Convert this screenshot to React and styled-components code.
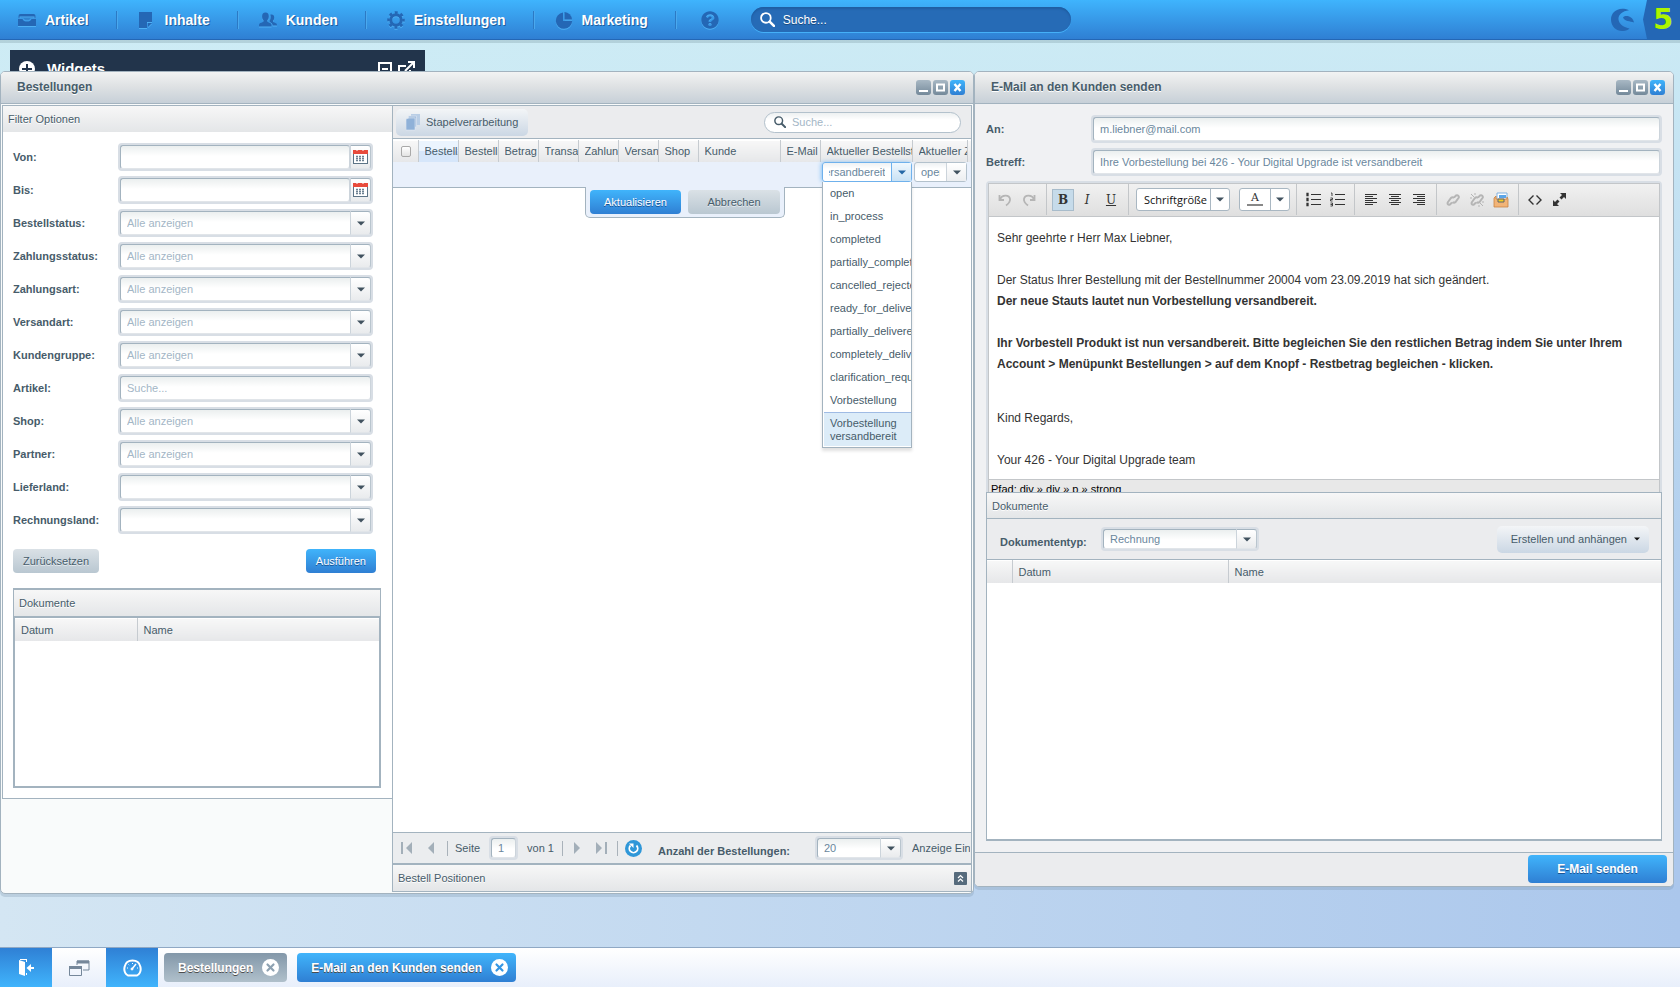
import React, { useEffect, useRef, useState } from 'react';
import styled, { createGlobalStyle, css } from 'styled-components';
import { FaQuestionCircle } from 'react-icons/fa';

const line = '#a3b3bf';
const text = '#475c6a';
const blue = 'linear-gradient(#40b4fb, #2f7fd3)';

const GlobalStyle = createGlobalStyle`
  * {
    box-sizing: border-box;
  }
  body {
    margin: 0;
    font: 11px/14px 'Liberation Sans', Arial, Helvetica, sans-serif;
    color: ${text};
  }
  button, input, select {
    font: inherit;
    color: inherit;
    margin: 0;
  }
  button {
    border: 0;
    padding: 0;
    background: none;
    cursor: pointer;
  }
  table {
    border-collapse: collapse;
    table-layout: fixed;
    width: 100%;
  }
`;

const Page = styled.div`
  display: flex;
  flex-direction: column;
  min-height: 100vh;
  background: linear-gradient(to bottom, #cdecf5 0%, rgba(205, 236, 245, 0) 70%),
    linear-gradient(to right, #d4e6f3, #abc7ec);
`;

/* ---------- top bar ---------- */

const TopBar = styled.header`
  display: flex;
  height: 40px;
  background: linear-gradient(#3fb4fd, #2f7fd3);
  border-bottom: 1px solid #2467b5;
  box-shadow: 0 3px 0 rgba(120, 150, 160, 0.3);
`;

const MainNav = styled.nav`
  display: flex;
  align-items: center;
`;

const NavLink = styled.a`
  display: flex;
  align-items: center;
  height: 18px;
  padding: 0 27px 0 ${(props) => (props.$first ? 18 : 21)}px;
  border-right: 1px solid #2c79c4;
  box-shadow: 1px 0 0 #4aa9ee;
  font-size: 14px;
  font-weight: bold;
  color: #fff;
  text-decoration: none;
  text-shadow: 1px 1px 0 #1f5f9f;

  svg {
    width: 18px;
    height: 18px;
    margin-right: 9px;
    color: #2467b5;
    filter: drop-shadow(0 1px 0 #4fb0f4);
  }
`;

const HelpButton = styled.button`
  display: flex;
  margin: 0 32px 0 25px;
  color: #2467b5;
  filter: drop-shadow(0 1px 0 #4fb0f4);
`;

const GlobalSearch = styled.label`
  display: flex;
  align-items: center;
  align-self: center;
  gap: 8px;
  width: 320px;
  height: 25px;
  padding: 0 9px;
  border-radius: 13px;
  background: #266bb6;
  box-shadow: inset 0 2px 2px #1f5ea3, 0 1px 0 #45b0f8;

  input {
    flex: 1;
    min-width: 0;
    border: 0;
    padding: 0;
    outline: none;
    background: none;
    font-size: 12px;
    color: #fff;
  }
  input::placeholder {
    color: #fff;
    opacity: 1;
    text-shadow: 0 1px 0 #174a80;
  }
`;

const Brand = styled.div`
  display: flex;
  margin-left: auto;
  gap: 8px;
  align-items: center;
`;

const Version = styled.span`
  display: flex;
  align-items: center;
  justify-content: center;
  width: 37px;
  height: 39px;
  padding-left: 3px;
  background: #2467b5;
  clip-path: polygon(4px 0, 100% 0, 100% 100%, 4px 100%, 0 50%);
  font: bold 29px/39px 'DejaVu Sans', sans-serif;
  color: #adf400;
`;

/* ---------- desktop ---------- */

const Desktop = styled.main`
  position: relative;
  flex: 1;
  display: grid;
  grid-template-columns: minmax(0, 974fr) minmax(0, 700fr);
  padding: 31px 6px 53px 0;
`;

const WidgetBar = styled.section`
  position: absolute;
  top: 10px;
  left: 10px;
  display: flex;
  align-items: center;
  width: 415px;
  height: 38px;
  padding: 0 10px 0 9px;
  background: #22344b;
  color: #fff;

  h2 {
    flex: 1;
    margin: 0 0 0 12px;
    font-size: 15px;
    line-height: 18px;
  }
  svg + svg {
    margin-left: 6px;
  }
`;

const Window = styled.section`
  position: relative;
  display: flex;
  flex-direction: column;
  min-width: 0;
  margin-bottom: ${(props) => props.$lift || 0}px;
  border: 1px solid ${line};
  border-radius: 5px;
  background: ${(props) => props.$bg};
  box-shadow: 0 3px 0 rgba(110, 140, 165, 0.25);
`;

const TitleBar = styled.header`
  display: flex;
  align-items: center;
  gap: 2px;
  height: 32px;
  padding: 0 8px 0 16px;
  border-bottom: 1px solid ${line};
  border-radius: 4px 4px 0 0;
  background: linear-gradient(#f2f3f3, #dfe2e4 45%, #c7d0d8);

  h2 {
    flex: 1;
    margin: 0;
    font-size: 12px;
    line-height: 16px;
    padding-bottom: 2px;
    text-shadow: 0 1px 0 #fff;
  }
`;

const WindowButton = styled.button`
  display: flex;
  width: 15px;
  height: 15px;
  border-radius: 3px;
  background: ${(props) => (props.$close ? blue : 'linear-gradient(#a8b8c4, #74899a)')};
`;

const OrdersBody = styled.div`
  flex: 1;
  display: grid;
  grid-template-columns: 390px minmax(0, 1fr);
  padding: 1px;
`;

const PanelHeader = styled.h3`
  display: flex;
  align-items: center;
  justify-content: space-between;
  height: ${(props) => props.$height || 26}px;
  margin: 0;
  padding: 0 4px 0 5px;
  background: linear-gradient(#f7f7f7, #e4e6e8);
  font-size: 11px;
  font-weight: normal;
  text-shadow: 0 1px 0 #fff;

  button {
    display: flex;
  }
`;

/* ---------- fields and buttons ---------- */

const FieldFrame = styled.span`
  display: flex;
  flex: ${(props) => (props.$width ? 'none' : 1)};
  width: ${(props) => (props.$width ? `${props.$width}px` : 'auto')};
  height: ${(props) => (props.$small ? 24 : 28)}px;
  min-width: 0;
  border: 2px solid #d8dee5;
  border-radius: 4px;
  background: #d8dee5;
`;

const fieldInner = css`
  flex: 1;
  min-width: 0;
  height: 100%;
  border: 1px solid #a3b3bf;
  border-right-color: #ccd4db;
  border-bottom-color: #e1e5e9;
  border-radius: 3px;
  padding: 0 6px;
  outline: none;
  appearance: none;
  background: linear-gradient(#ebefef, #fff 10px);
  color: #6a879d;

  &::placeholder {
    color: #a3b6c6;
    opacity: 1;
  }
`;

const TextInput = styled.input`
  ${fieldInner}
`;

const Dropdown = styled.select`
  ${fieldInner}
  color: ${(props) => (props.$muted ? '#a3b6c6' : '#6a879d')};
  border-right: 0;
  border-radius: 3px 0 0 3px;
`;

const Trigger = styled.span`
  display: flex;
  align-items: center;
  justify-content: center;
  width: 21px;
  border: 1px solid #a3b3bf;
  border-left-color: #ccd4db;
  border-right-color: #b9c5ce;
  border-bottom-color: #e1e5e9;
  border-radius: 0 3px 3px 0;
  background: linear-gradient(#fff, #e9ebed);
  color: #41525f;
`;

const Button = styled.button`
  height: ${(props) => (props.$large ? 28 : 24)}px;
  min-width: ${(props) => props.$min || 0}px;
  padding: 0 10px;
  border-radius: 4px;
  background: ${(props) => (props.$primary ? blue : 'linear-gradient(#dae1e6, #b9c7d1)')};
  color: ${(props) => (props.$primary ? '#fff' : text)};
  font-size: ${(props) => (props.$large ? 12 : 11)}px;
  font-weight: ${(props) => (props.$large ? 'bold' : 'normal')};
  text-shadow: ${(props) => (props.$primary ? '0 1px 0 #1b5293' : '0 1px 0 #e6ecf0')};
`;

const ToolButton = styled.button`
  display: flex;
  align-items: center;
  gap: ${(props) => (props.$menu ? 7 : 6)}px;
  height: 27px;
  padding: 0 ${(props) => (props.$menu ? 9 : 10)}px 0 ${(props) => (props.$menu ? 14 : 10)}px;
  border-radius: 5px;
  background: linear-gradient(#f3f5f7, #cbd7e4);

  svg {
    color: #111;
  }
`;

const FilterForm = styled.form`
  border: 1px solid ${line};
  border-right: 0;
  background: #fff;
  padding-bottom: 10px;
`;

const FilterRow = styled.div`
  display: flex;
  align-items: center;
  margin: 0 19px 5px 10px;

  label {
    width: 105px;
    font-weight: bold;
  }
`;

const FilterRows = styled.div`
  padding-top: 11px;
`;

const FilterActions = styled.div`
  display: flex;
  justify-content: space-between;
  padding: 10px 16px 15px 10px;
`;

const FilterDocuments = styled.div`
  height: 200px;
  margin: 0 11px 0 10px;
  border: 1px solid ${line};
  border-top-width: 2px;
  background: #fff;
`;

const TableFrame = styled.div`
  height: 171px;
  border: solid ${line};
  border-width: 2px 1px 1px;
`;

const HeadCell = styled.th`
  height: ${(props) => props.$height || 22}px;
  padding: 0 0 0 6px;
  text-align: left;
  font-weight: normal;
  border-right: ${(props) => (props.$last ? 0 : '1px solid #c6cbd0')};
  background: ${(props) =>
    props.$sorted ? 'linear-gradient(#ebf4fe 50%, #d6e6fa 50%)' : 'linear-gradient(#f8f8f8, #e6e7e9)'};
  box-shadow: inset 0 1px 0 #fff;
`;

const HeadText = styled.span`
  display: block;
  overflow: hidden;
  white-space: nowrap;
`;

/* ---------- orders grid ---------- */

const OrdersPanel = styled.div`
  display: flex;
  flex-direction: column;
  min-width: 0;
  border: 1px solid ${line};
  background: #fff;
`;

const GridToolbar = styled.div`
  display: flex;
  align-items: center;
  justify-content: space-between;
  height: 33px;
  padding: 0 10px 0 3px;
  border-bottom: 1px solid ${line};
  background: #ebecee;
`;

const GridSearch = styled.label`
  display: flex;
  align-items: center;
  gap: 6px;
  width: 197px;
  height: 21px;
  padding: 0 9px;
  border: 1px solid #b3c1cc;
  border-radius: 11px;
  background: linear-gradient(#edf0f1, #fff 7px);

  input {
    flex: 1;
    min-width: 0;
    padding: 0;
    border: 0;
    outline: none;
    background: none;
  }
  input::placeholder {
    color: #a3b6c6;
    opacity: 1;
  }
`;

const GridArea = styled.div`
  flex: 1;
  padding-top: 1px;
`;

const EditCell = styled.td`
  position: relative;
  height: 25px;
  padding: 0 0 0 2px;
  vertical-align: top;
  border-bottom: 1px solid ${line};
  background: #e9f0fb;
`;

const CellCombo = styled.div`
  display: flex;
  height: 20px;
  border: 1px solid ${(props) => (props.$active ? '#6fb1ec' : '#b3c1cc')};
  border-radius: 3px;
  background: linear-gradient(#eef1f3, #fff 6px);
  box-shadow: ${(props) => (props.$active ? '-1px 0 4px #8cc4f5' : 'none')};

  input {
    flex: 1;
    min-width: 0;
    border: 0;
    padding: 0 6px;
    outline: none;
    background: none;
    color: #6a879d;
  }
  button {
    display: flex;
    align-items: center;
    justify-content: center;
    width: 20px;
    border-left: 1px solid ${(props) => (props.$active ? '#6fb1ec' : '#ccd4db')};
    background: ${(props) =>
      props.$active ? 'linear-gradient(#f0f8fe, #c9e2f5)' : 'linear-gradient(#fff, #eceef0)'};
    color: ${(props) => (props.$active ? '#2467a5' : '#41525f')};
  }
`;

const StatusMenu = styled.ul`
  position: absolute;
  z-index: 3;
  top: 20px;
  left: 2px;
  right: 0;
  margin: 0;
  padding: 0 0 1px 1px;
  list-style: none;
  border: 1px solid ${line};
  border-top: 0;
  background: #fff;
  box-shadow: 0 3px 3px rgba(0, 0, 0, 0.12);
`;

const StatusOption = styled.li`
  padding: ${(props) => (props.$active ? '4px 6px 3px' : '5px 0 5px 6px')};
  overflow: hidden;
  line-height: 13px;
  border-top: ${(props) => (props.$active ? '1px solid #9fbbe4' : 0)};
  background: ${(props) => (props.$active ? '#dcecf8' : 'none')};
`;

const EditorActions = styled.div`
  position: absolute;
  z-index: 2;
  left: 192px;
  top: 100%;
  display: flex;
  gap: 7px;
  padding: 3px 4px;
  border: 1px solid ${line};
  border-top: 0;
  border-radius: 0 0 5px 5px;
  background: #e9f0fb;
`;

const Checkbox = styled.input`
  appearance: none;
  display: block;
  width: 10px;
  height: 11px;
  margin-left: 2px;
  border: 1px solid #a9a9a9;
  border-radius: 2px;
  background: linear-gradient(#fff, #e3e3e3);
`;

const Pager = styled.div`
  display: flex;
  align-items: center;
  height: 33px;
  padding-left: 2px;
  overflow: hidden;
  white-space: nowrap;
  border-top: 1px solid ${line};
  border-bottom: 2px solid ${line};
  background: #ebedef;
`;

const PageLabel = styled.label`
  display: flex;
  align-items: center;
  gap: 9px;
  margin: 0 4px 0 5px;
`;

const PageButton = styled.button`
  display: flex;
  justify-content: center;
  width: 24px;
  color: #a3afb9;
`;

const ReloadButton = styled.button`
  display: flex;
  margin-left: 5px;
`;

const PagerDivider = styled.span`
  width: 1px;
  height: 15px;
  margin: 0 2px 0 4px;
  background: #a9b2ba;
`;

const PageSizeLabel = styled.label`
  width: 173px;
  padding: 5px 0 0 16px;
  font-weight: bold;
`;

const PagerInfo = styled.span`
  flex: 1;
  min-width: 0;
  margin: 0 1px 0 9px;
  overflow: hidden;
`;

/* ---------- mail window ---------- */

const MailBody = styled.div`
  flex: 1;
  display: flex;
  flex-direction: column;
  padding: 11px;
`;

const MailRow = styled.div`
  display: flex;
  align-items: center;
  margin-bottom: 5px;

  label {
    width: 105px;
    font-weight: bold;
  }
`;

const Editor = styled.div`
  border: 2px solid #d8dee5;
  border-bottom: 0;
  border-radius: 4px 4px 0 0;
`;

const EditorInner = styled.div`
  border: 1px solid #c3c6c9;
  border-bottom: 0;
  background: #fff;
  color: #333;
`;

const EditorToolbar = styled.div`
  display: flex;
  height: 33px;
  padding-bottom: 1px;
  border-bottom: 1px solid #c3c6c9;
  background: linear-gradient(#f1f1f1, #dfdfdf);
`;

const ToolGroup = styled.div`
  display: flex;
  align-items: center;
  gap: ${(props) => props.$gap || 0}px;
  padding: ${(props) => (props.$gap ? '0 6px 0 7px' : '0 5px 0 4px')};
  border-right: ${(props) => (props.$last ? 0 : '1px solid #c3c6c9')};
`;

const EditorButton = styled.button`
  display: flex;
  align-items: center;
  justify-content: center;
  width: 22px;
  height: 22px;
  margin: 0 1px;
  border: 1px solid ${(props) => (props.$active ? '#a8bccb' : 'transparent')};
  background: ${(props) => (props.$active ? '#c6dbea' : 'none')};
  color: ${(props) => (props.disabled ? '#b5b5b5' : '#333')};
  font: ${(props) => props.$look || 'normal'} 12px 'DejaVu Serif', serif;
  text-decoration: ${(props) => (props.$underline ? 'underline' : 'none')};
`;

const EditorSelect = styled.span`
  display: flex;
  width: ${(props) => props.$width}px;
  height: 23px;
  border: 1px solid #a9b7c2;
  border-radius: 3px;
  background: #fff;

  select,
  > button {
    flex: 1;
    min-width: 0;
    appearance: none;
    padding: 0 0 0 7px;
    border: 0;
    background: none;
    font: 11px 'Open Sans', sans-serif;
    color: #111;
  }
  > button {
    display: flex;
    flex-direction: column;
    align-items: center;
    padding: 2px 0 0;
    font: 11px/13px 'DejaVu Serif', serif;
    color: #333;
  }
  > button::after {
    content: '';
    width: 16px;
    height: 2px;
    background: #888;
  }
  > span {
    display: flex;
    align-items: center;
    justify-content: center;
    width: 19px;
    border-left: 1px solid #a9b7c2;
    color: #41525f;
  }
`;

const Letter = styled.div`
  padding: 11px 8px 8px;
  font-size: 12px;
  line-height: 21px;

  p {
    margin: 0 0 21px;
  }
  p:last-child {
    margin: 0;
  }
`;

const Closing = styled.p`
  && {
    margin-top: 33px;
  }
`;

const PathBar = styled.div`
  height: 13px;
  padding: 2px 2px 0;
  overflow: hidden;
  border-top: 1px solid #c3c6c9;
  background: #e8e8e8;
  color: #000;
`;

const MailDocuments = styled.section`
  flex: 1;
  border: 1px solid ${line};
  border-bottom-width: 2px;
  background: #fff;
`;

const DocumentToolbar = styled.div`
  display: flex;
  align-items: center;
  height: 42px;
  padding: 0 12px 0 13px;
  border: solid ${line};
  border-width: 1px 0;
  background: #ebecee;

  label {
    width: 101px;
    padding-top: 5px;
    font-weight: bold;
  }
  > button {
    margin-left: auto;
  }
`;

const MailFooter = styled.footer`
  display: flex;
  align-items: center;
  justify-content: flex-end;
  height: 34px;
  padding: 0 6px 1px;
  border-top: 1px solid ${line};
  border-radius: 0 0 4px 4px;
  background: #ebecee;
`;

/* ---------- task bar ---------- */

const TaskBar = styled.footer`
  display: flex;
  align-items: center;
  height: 40px;
  border-top: 1px solid #8fa8c4;
  background: linear-gradient(#fff, #e8effb);
`;

const TaskIcon = styled.button`
  display: flex;
  align-items: center;
  justify-content: center;
  width: ${(props) => (props.$blue ? 52 : 54)}px;
  height: 39px;
  background: ${(props) => (props.$blue ? 'linear-gradient(#2f80d5, #40b4fc)' : 'none')};
`;

const Task = styled.button`
  display: flex;
  align-items: center;
  gap: 9px;
  height: 29px;
  margin-left: ${(props) => (props.$active ? 10 : 6)}px;
  padding: 0 8px 0 14px;
  border-radius: 4px;
  background: ${(props) => (props.$active ? blue : 'linear-gradient(#8297a9, #b0c0cb)')};
  color: #fff;
  font-size: 12px;
  font-weight: bold;
  text-shadow: 0 1px 0 #4c4c4c;
`;

/* ---------- drawings ---------- */

const Arrow = ({ small }) => (
  <svg width={small ? 6 : 8} height={small ? 4 : 5} viewBox="0 0 8 5">
    <path d="M0 .5h8l-4 4z" fill="currentColor" />
  </svg>
);

const SearchIcon = ({ size, color }) => (
  <svg width={size} height={size} viewBox="0 0 14 14" fill="none" stroke={color}>
    <circle cx="5.5" cy="5.5" r="4.5" strokeWidth="1.7" />
    <path d="M9 9l4 4" strokeWidth="2.4" strokeLinecap="round" />
  </svg>
);

const TrayIcon = () => (
  <svg viewBox="0 0 18 18" fill="currentColor">
    <path d="M2.500 3h13a2 2 0 0 1 2 2v2.500h-1V5.500h-15v2h-1V5a2 2 0 0 1 2-2z" />
    <path d="M0 8h4.500c.8 2 2 2.500 4.500 2.500s3.700-.5 4.500-2.500H18v7H0z" />
    <path d="M2.500 6.500h13v.8h-3c-1 1.800-1.500 2-3.500 2s-2.500-.2-3.500-2h-3z" opacity=".5" />
  </svg>
);

const PageIcon = () => (
  <svg viewBox="0 0 18 18" fill="currentColor">
    <path d="M1 1h13v10H9v6H1z" />
    <path d="M10 12h4l-4 4z" />
  </svg>
);

const CustomersIcon = () => (
  <svg viewBox="0 0 18 18" fill="currentColor">
    <path d="M6.500 1.500c2.300 0 3.300 1.500 3.300 3.800 0 1.900-.6 3.200-1.500 4v1.200c0 1 4.200 1 4.200 3.700v1.300H0v-1.300c0-2.700 4.500-2.700 4.500-3.700V9.300c-.9-.8-1.400-2.100-1.400-4 0-2.300 1.100-3.800 3.400-3.800z" />
    <path d="M12.500 3.500c1.800 0 2.700 1.200 2.700 3 0 1.500-.5 2.600-1.200 3.200v1c0 .9 4 .9 4 3.200v.6h-4.300c-.2-2-1.800-2.800-3-3.400v-1.500c.7-.9 1-2.100 1-3.800 0-.8-.1-1.400-.4-2 .4-.2.800-.3 1.200-.3z" />
  </svg>
);

const GearIcon = () => (
  <svg viewBox="0 0 18 18" fill="none" stroke="currentColor">
    <circle cx="9" cy="9" r="5.200" strokeWidth="3" />
    <circle cx="9" cy="9" r="7.500" strokeWidth="2.600" strokeDasharray="2.945" strokeDashoffset="1.470" />
  </svg>
);

const PieIcon = () => (
  <svg viewBox="0 0 18 18" fill="currentColor">
    <path d="M8 1.500V10h9.200A8.200 8.200 0 1 1 8 1.500z" />
    <path d="M9.500 1A8 8 0 0 1 17 8.500H9.500z" />
  </svg>
);

const CalendarIcon = () => (
  <svg width="15" height="16" viewBox="0 0 15 16">
    <path d="M0 3v12h15V3" fill="#5d7486" />
    <path d="M1 4h13v10H1z" fill="#fff" />
    <path d="M0 1h15v4H0z" fill="#e84b3c" />
    <path d="M4 0v2M10 0v2" stroke="#fff" strokeWidth="1" />
    <path d="M3 7.500h9M3 9.500h9M3 11.500h9" stroke="#6d8192" strokeWidth="1.300" strokeDasharray="2 1" />
  </svg>
);

const PagesIcon = () => (
  <svg width="14" height="17" viewBox="0 0 14 17">
    <path d="M5 0h9v11H5z" fill="#b9cee6" />
    <path d="M2.500 2h8v11h-8z" fill="#a7c0de" stroke="#dfe8f3" strokeWidth=".6" />
    <path d="M0 5l3-1h6v12H0z" fill="#8fb1d8" stroke="#dfe8f3" strokeWidth=".6" />
  </svg>
);

const MinimizeIcon = () => (
  <svg width="15" height="15" viewBox="0 0 15 15">
    <path d="M3 10h9v2H3z" fill="#fff" />
  </svg>
);

const MaximizeIcon = () => (
  <svg width="15" height="15" viewBox="0 0 15 15">
    <path d="M4 4.500h7v6H4z" fill="none" stroke="#fff" strokeWidth="2" />
  </svg>
);

const CloseIcon = () => (
  <svg width="15" height="15" viewBox="0 0 15 15">
    <path d="M4.500 4l6 7M10.500 4l-6 7" stroke="#fff" strokeWidth="2.4" />
  </svg>
);

const PageArrow = ({ back, edge }) => (
  <svg width="12" height="12" viewBox="0 0 12 12" fill="currentColor">
    <g transform={back ? 'matrix(-1 0 0 1 12 0)' : undefined}>
      <path d={edge ? 'M1 0l6 6-6 6zM10 0h2v12h-2z' : 'M3 0l6 6-6 6z'} />
    </g>
  </svg>
);

const RefreshIcon = () => (
  <svg width="17" height="17" viewBox="0 0 17 17">
    <circle cx="8.500" cy="8.500" r="8.500" fill="#2f97d8" />
    <path d="M5.500 5.500a4.200 4.200 0 1 0 6 0" fill="none" stroke="#fff" strokeWidth="1.800" />
    <path d="M4 3.500h4.500V8z" fill="#fff" />
  </svg>
);

const LinesIcon = ({ rows }) => (
  <svg width="13" height="13" viewBox="0 0 13 13" stroke="currentColor" strokeWidth="1">
    {rows.map(([x1, x2], i) => (
      <path key={i} d={`M${x1} ${i * 2 + 1.5}H${x2}`} />
    ))}
  </svg>
);

const BulletsIcon = ({ numbered }) => (
  <svg width="15" height="15" viewBox="0 0 15 15" stroke="currentColor" fill="none">
    <path d="M5 2.500h10M5 7.500h10M5 12.500h10" />
    {numbered ? (
      <path d="M1 1h1v3M.500 6h2v1.500h-2V9h2M.500 11h2v3h-2M.500 12.500h2" strokeWidth=".9" />
    ) : (
      <path d="M1 1.500h1v2H1zM1 6.500h1v2H1zM1 11.500h1v2H1z" strokeWidth="1.300" />
    )}
  </svg>
);

const UndoIcon = ({ redo }) => (
  <svg width="14" height="14" viewBox="0 0 14 14" fill="none" stroke="currentColor" strokeWidth="1.800">
    <g transform={redo ? 'matrix(-1 0 0 1 14 0)' : undefined}>
      <path d="M2 6C4 2 11 1 12 6c.5 3-2 5-4 6.500" />
      <path d="M1.500 2v5H6" />
    </g>
  </svg>
);

const ChainIcon = ({ broken }) => (
  <svg width="14" height="14" viewBox="0 0 14 14" fill="none" stroke="currentColor" strokeWidth="2">
    <path d="M6 9.500L4 11.500c-2 1-3-1-2-2.500l3-4c1-1 2-1 3 0M8 4.500l2-2c2-1 3.500 1 2.500 2.500l-3 4c-1 1-2 1-3 0" />
    {broken && <path d="M1 1l3 3M5 0v2M0 5h2M13 13l-3-3M9 14v-2M14 9h-2" strokeWidth="1" />}
  </svg>
);

const PictureIcon = () => (
  <svg width="16" height="16" viewBox="0 0 16 16">
    <path d="M4 1h10v9H4z" fill="#fff" stroke="#7fb0e0" />
    <path d="M6 3h7v3H6z" fill="#5ba5e8" />
    <path d="M1 6l2-2v3h11V5l1 2v8H1z" fill="#f2b477" stroke="#c98443" strokeWidth=".800" />
    <path d="M5 7h6v3H5z" fill="#f5cf1e" stroke="#5b6470" />
  </svg>
);

const CodeIcon = () => (
  <svg width="14" height="12" viewBox="0 0 14 12" fill="none" stroke="currentColor" strokeWidth="1.400">
    <path d="M5.500 1.500L1 6l4.500 4.500M8.500 1.500L13 6l-4.500 4.500" />
  </svg>
);

const ExpandIcon = () => (
  <svg width="13" height="13" viewBox="0 0 13 13" fill="currentColor">
    <path d="M7 0h6v6l-2-2-2.500 2.500-2-2L9 2zM6 13H0V7l2 2 2.500-2.500 2 2L4 11z" />
  </svg>
);

const TaskClose = ({ color }) => (
  <svg width="17" height="17" viewBox="0 0 17 17">
    <circle cx="8.500" cy="8.500" r="8.500" fill="#fff" />
    <path d="M5.500 5.500l6 6M11.500 5.500l-6 6" stroke={color} strokeWidth="2.200" strokeLinecap="round" />
  </svg>
);

/* ---------- parts ---------- */

const navItems = [
  { label: 'Artikel', icon: <TrayIcon /> },
  { label: 'Inhalte', icon: <PageIcon /> },
  { label: 'Kunden', icon: <CustomersIcon /> },
  { label: 'Einstellungen', icon: <GearIcon /> },
  { label: 'Marketing', icon: <PieIcon /> }
];

const filters = [
  { name: 'von', label: 'Von:', type: 'date' },
  { name: 'bis', label: 'Bis:', type: 'date' },
  { name: 'bestellstatus', label: 'Bestellstatus:', type: 'select', value: 'Alle anzeigen' },
  { name: 'zahlungsstatus', label: 'Zahlungsstatus:', type: 'select', value: 'Alle anzeigen' },
  { name: 'zahlungsart', label: 'Zahlungsart:', type: 'select', value: 'Alle anzeigen' },
  { name: 'versandart', label: 'Versandart:', type: 'select', value: 'Alle anzeigen' },
  { name: 'kundengruppe', label: 'Kundengruppe:', type: 'select', value: 'Alle anzeigen' },
  { name: 'artikel', label: 'Artikel:', type: 'text' },
  { name: 'shop', label: 'Shop:', type: 'select', value: 'Alle anzeigen' },
  { name: 'partner', label: 'Partner:', type: 'select', value: 'Alle anzeigen' },
  { name: 'lieferland', label: 'Lieferland:', type: 'select', value: '' },
  { name: 'rechnungsland', label: 'Rechnungsland:', type: 'select', value: '' }
];

const columns = [
  { label: 'Bestellzeit', width: 40, sorted: true },
  { label: 'Bestellnummer', width: 40 },
  { label: 'Betrag', width: 40 },
  { label: 'Transaktion', width: 40 },
  { label: 'Zahlungsart', width: 40 },
  { label: 'Versandart', width: 40 },
  { label: 'Shop', width: 40 },
  { label: 'Kunde', width: 82 },
  { label: 'E-Mail', width: 40 },
  { label: 'Aktueller Bestellstatus', width: 92 },
  { label: 'Aktueller Zahlungsstatus', width: 55 }
];

const statuses = [
  'open',
  'in_process',
  'completed',
  'partially_completed',
  'cancelled_rejected',
  'ready_for_delivery',
  'partially_delivered',
  'completely_delivered',
  'clarification_required',
  'Vorbestellung',
  'Vorbestellung versandbereit'
];

const WindowTitle = ({ title }) => (
  <TitleBar>
    <h2>{title}</h2>
    <WindowButton aria-label="Minimieren">
      <MinimizeIcon />
    </WindowButton>
    <WindowButton aria-label="Maximieren">
      <MaximizeIcon />
    </WindowButton>
    <WindowButton $close aria-label="Schließen">
      <CloseIcon />
    </WindowButton>
  </TitleBar>
);

const FilterField = ({ field }) => (
  <FilterRow>
    <label htmlFor={field.name}>{field.label}</label>
    <FieldFrame>
      {field.type === 'select' ? (
        <Dropdown id={field.name} $muted defaultValue={field.value}>
          <option value={field.value}>{field.value}</option>
        </Dropdown>
      ) : (
        <TextInput id={field.name} type="text" placeholder={field.type === 'text' ? 'Suche...' : ''} />
      )}
      {field.type === 'select' && (
        <Trigger>
          <Arrow />
        </Trigger>
      )}
      {field.type === 'date' && (
        <Trigger>
          <CalendarIcon />
        </Trigger>
      )}
    </FieldFrame>
  </FilterRow>
);

const StatusCombo = () => {
  const [value, setValue] = useState('Vorbestellung versandbereit');
  const [open, setOpen] = useState(true);
  const inputRef = useRef(null);

  // keep the end of a long status visible in the narrow cell
  useEffect(() => {
    inputRef.current.scrollLeft = inputRef.current.scrollWidth;
  }, [value]);

  const choose = (status) => {
    setValue(status);
    setOpen(false);
  };

  return (
    <>
      <CellCombo $active>
        <input
          ref={inputRef}
          aria-label="Aktueller Bestellstatus"
          value={value}
          onChange={(e) => setValue(e.target.value)}
        />
        <button aria-label="Status wählen" onClick={() => setOpen(!open)}>
          <Arrow />
        </button>
      </CellCombo>
      {open && (
        <StatusMenu role="listbox">
          {statuses.map((status) => (
            <StatusOption
              key={status}
              role="option"
              aria-selected={status === value}
              $active={status === value}
              onClick={() => choose(status)}
            >
              {status}
            </StatusOption>
          ))}
        </StatusMenu>
      )}
    </>
  );
};

const OrdersGrid = () => (
  <table>
    <colgroup>
      <col width="25" />
      {columns.map((column) => (
        <col key={column.label} width={column.width} />
      ))}
      <col />
    </colgroup>
    <thead>
      <tr>
        <HeadCell>
          <Checkbox type="checkbox" aria-label="Alle auswählen" />
        </HeadCell>
        {columns.map((column) => (
          <HeadCell key={column.label} $sorted={column.sorted}>
            <HeadText>{column.label}</HeadText>
          </HeadCell>
        ))}
        <HeadCell $last />
      </tr>
    </thead>
    <tbody>
      <tr>
        <EditCell colSpan="10">
          <EditorActions>
            <Button $primary $min={91}>Aktualisieren</Button>
            <Button $min={92}>Abbrechen</Button>
          </EditorActions>
        </EditCell>
        <EditCell>
          <StatusCombo />
        </EditCell>
        <EditCell>
          <CellCombo>
            <input aria-label="Aktueller Zahlungsstatus" defaultValue="open" />
            <button aria-label="Zahlungsstatus wählen">
              <Arrow />
            </button>
          </CellCombo>
        </EditCell>
        <EditCell />
      </tr>
    </tbody>
  </table>
);

const OrdersWindow = () => (
  <Window $bg="#f9fbfb">
    <WindowTitle title="Bestellungen" />
    <OrdersBody>
      <div>
        <FilterForm onSubmit={(e) => e.preventDefault()}>
          <PanelHeader>Filter Optionen</PanelHeader>
          <FilterRows>
            {filters.map((field) => (
              <FilterField key={field.name} field={field} />
            ))}
          </FilterRows>
          <FilterActions>
            <Button type="reset">Zurücksetzen</Button>
            <Button type="submit" $primary>Ausführen</Button>
          </FilterActions>
          <FilterDocuments>
            <PanelHeader>Dokumente</PanelHeader>
            <TableFrame>
              <table>
                <colgroup>
                  <col width="122" />
                  <col />
                </colgroup>
                <thead>
                  <tr>
                    <HeadCell $height={23}>Datum</HeadCell>
                    <HeadCell $height={23} $last>Name</HeadCell>
                  </tr>
                </thead>
              </table>
            </TableFrame>
          </FilterDocuments>
        </FilterForm>
      </div>
      <OrdersPanel>
        <GridToolbar>
          <ToolButton>
            <PagesIcon />
            Stapelverarbeitung
          </ToolButton>
          <GridSearch>
            <SearchIcon size={12} color="#475c6a" />
            <input type="text" placeholder="Suche..." aria-label="Bestellungen suchen" />
          </GridSearch>
        </GridToolbar>
        <GridArea>
          <OrdersGrid />
        </GridArea>
        <Pager>
          <PageButton aria-label="Erste Seite">
            <PageArrow back edge />
          </PageButton>
          <PageButton aria-label="Vorherige Seite">
            <PageArrow back />
          </PageButton>
          <PagerDivider />
          <PageLabel>
            Seite
            <FieldFrame $small $width={29}>
              <TextInput type="text" defaultValue="1" />
            </FieldFrame>
            von 1
          </PageLabel>
          <PagerDivider />
          <PageButton aria-label="Nächste Seite">
            <PageArrow />
          </PageButton>
          <PageButton aria-label="Letzte Seite">
            <PageArrow edge />
          </PageButton>
          <PagerDivider />
          <ReloadButton aria-label="Aktualisieren">
            <RefreshIcon />
          </ReloadButton>
          <PageSizeLabel htmlFor="pageSize">Anzahl der Bestellungen:</PageSizeLabel>
          <FieldFrame $small $width={88}>
            <Dropdown id="pageSize" defaultValue="20">
              <option>20</option>
              <option>50</option>
            </Dropdown>
            <Trigger>
              <Arrow />
            </Trigger>
          </FieldFrame>
          <PagerInfo>Anzeige Eintrag</PagerInfo>
        </Pager>
        <PanelHeader>
          Bestell Positionen
          <button aria-label="Aufklappen">
            <svg width="13" height="13" viewBox="0 0 13 13">
              <rect width="13" height="13" rx="1" fill="#566b7c" />
              <path d="M4 6l2.500-2.500L9 6M4 9.500L6.500 7 9 9.500" fill="none" stroke="#fff" strokeWidth="1.200" />
            </svg>
          </button>
        </PanelHeader>
      </OrdersPanel>
    </OrdersBody>
  </Window>
);

const MailToolbar = () => (
  <EditorToolbar>
    <ToolGroup>
      <EditorButton disabled aria-label="Rückgängig"><UndoIcon /></EditorButton>
      <EditorButton disabled aria-label="Wiederholen"><UndoIcon redo /></EditorButton>
    </ToolGroup>
    <ToolGroup>
      <EditorButton $active $look="bold">B</EditorButton>
      <EditorButton $look="italic">I</EditorButton>
      <EditorButton $underline>U</EditorButton>
    </ToolGroup>
    <ToolGroup $gap={9}>
      <EditorSelect $width={94}>
        <select aria-label="Schriftgröße">
          <option>Schriftgröße</option>
        </select>
        <span><Arrow /></span>
      </EditorSelect>
      <EditorSelect $width={51}>
        <button aria-label="Textfarbe">A</button>
        <span><Arrow /></span>
      </EditorSelect>
    </ToolGroup>
    <ToolGroup>
      <EditorButton aria-label="Liste"><BulletsIcon /></EditorButton>
      <EditorButton aria-label="Nummerierte Liste"><BulletsIcon numbered /></EditorButton>
    </ToolGroup>
    <ToolGroup>
      <EditorButton aria-label="Linksbündig">
        <LinesIcon rows={[[0, 12], [0, 8], [0, 12], [0, 8], [0, 12], [0, 8]]} />
      </EditorButton>
      <EditorButton aria-label="Zentriert">
        <LinesIcon rows={[[0, 12], [2, 10], [0, 12], [2, 10], [0, 12], [2, 10]]} />
      </EditorButton>
      <EditorButton aria-label="Rechtsbündig">
        <LinesIcon rows={[[0, 12], [4, 12], [0, 12], [4, 12], [0, 12], [4, 12]]} />
      </EditorButton>
    </ToolGroup>
    <ToolGroup>
      <EditorButton disabled aria-label="Link einfügen"><ChainIcon /></EditorButton>
      <EditorButton disabled aria-label="Link entfernen"><ChainIcon broken /></EditorButton>
      <EditorButton aria-label="Bild einfügen"><PictureIcon /></EditorButton>
    </ToolGroup>
    <ToolGroup $last>
      <EditorButton aria-label="Quelltext"><CodeIcon /></EditorButton>
      <EditorButton aria-label="Vollbild"><ExpandIcon /></EditorButton>
    </ToolGroup>
  </EditorToolbar>
);

const MailWindow = () => (
  <Window $bg="#f0f1f3" $lift={7}>
    <WindowTitle title="E-Mail an den Kunden senden" />
    <MailBody>
      <MailRow>
        <label htmlFor="mailTo">An:</label>
        <FieldFrame>
          <TextInput id="mailTo" type="text" defaultValue="m.liebner@mail.com" />
        </FieldFrame>
      </MailRow>
      <MailRow>
        <label htmlFor="mailSubject">Betreff:</label>
        <FieldFrame>
          <TextInput
            id="mailSubject"
            type="text"
            defaultValue="Ihre Vorbestellung bei 426 - Your Digital Upgrade ist versandbereit"
          />
        </FieldFrame>
      </MailRow>
      <Editor>
        <EditorInner>
          <MailToolbar />
          <Letter>
            <p>Sehr geehrte r Herr Max Liebner,</p>
            <p>
              Der Status Ihrer Bestellung mit der Bestellnummer 20004 vom 23.09.2019 hat sich geändert.
              <br />
              <strong>Der neue Stauts lautet nun Vorbestellung versandbereit.</strong>
            </p>
            <p>
              <strong>
                Ihr Vorbestell Produkt ist nun versandbereit. Bitte begleichen Sie den restlichen Betrag indem
                Sie unter Ihrem Account &gt; Menüpunkt Bestellungen &gt; auf dem Knopf - Restbetrag begleichen
                - klicken.
              </strong>
            </p>
            <Closing>Kind Regards,</Closing>
            <p>Your 426 - Your Digital Upgrade team</p>
          </Letter>
          <PathBar>Pfad: div » div » p » strong</PathBar>
        </EditorInner>
      </Editor>
      <MailDocuments>
        <PanelHeader $height={25}>Dokumente</PanelHeader>
        <DocumentToolbar>
          <label htmlFor="documentType">Dokumententyp:</label>
          <FieldFrame $small $width={158}>
            <Dropdown id="documentType">
              <option>Rechnung</option>
            </Dropdown>
            <Trigger>
              <Arrow />
            </Trigger>
          </FieldFrame>
          <ToolButton $menu>
            Erstellen und anhängen
            <Arrow small />
          </ToolButton>
        </DocumentToolbar>
        <table>
          <colgroup>
            <col width="25" />
            <col width="216" />
            <col />
          </colgroup>
          <thead>
            <tr>
              <HeadCell $height={23} />
              <HeadCell $height={23}>Datum</HeadCell>
              <HeadCell $height={23} $last>Name</HeadCell>
            </tr>
          </thead>
        </table>
      </MailDocuments>
    </MailBody>
    <MailFooter>
      <Button $primary $large $min={139}>E-Mail senden</Button>
    </MailFooter>
  </Window>
);

const App = () => (
  <Page>
    <GlobalStyle />
    <TopBar>
      <MainNav>
        {navItems.map((item, index) => (
          <NavLink key={item.label} href="#" $first={index === 0}>
            {item.icon}
            {item.label}
          </NavLink>
        ))}
        <HelpButton aria-label="Hilfe">
          <FaQuestionCircle size={18} />
        </HelpButton>
      </MainNav>
      <GlobalSearch>
        <SearchIcon size={15} color="#fff" />
        <input type="text" placeholder="Suche..." aria-label="Suche" />
      </GlobalSearch>
      <Brand>
        <svg width="24" height="24" viewBox="0 0 24 24" fill="#2467b5">
          <path d="M18 2.200C7-2 0 4.500 0 11.500 0 19 6 23.500 12 23c3-.2 5-1.300 6.500-2.600C13 19.500 8 16.500 7.500 11.500 7 7 11 3 18 2.200z" />
          <path d="M12 9.500c3-3 10-1 11 5-4-1.500-9.500-1-11-5z" />
        </svg>
        <Version>5</Version>
      </Brand>
    </TopBar>

    <Desktop>
      <WidgetBar>
        <svg width="16" height="16" viewBox="0 0 16 16">
          <circle cx="8" cy="8" r="8" fill="#fff" />
          <path d="M8 3v10M3 8h10" stroke="#22344b" strokeWidth="2" />
        </svg>
        <h2>Widgets</h2>
        <svg width="14" height="14" viewBox="0 0 14 14" fill="none" stroke="#fff" strokeWidth="2">
          <path d="M1 1h12v12H1zM4 7h6" />
        </svg>
        <svg width="17" height="17" viewBox="0 0 17 17" fill="none" stroke="#fff" strokeWidth="2">
          <path d="M8 5H1v11h11V9M7 10l8-8M10 1h6v6" />
        </svg>
      </WidgetBar>
      <OrdersWindow />
      <MailWindow />
    </Desktop>

    <TaskBar>
      <TaskIcon $blue aria-label="Abmelden">
        <svg width="16" height="18" viewBox="0 0 16 18" fill="#fff">
          <path d="M1 1l6 2v14l-6-2zM2 0h7v3H8V1H2zM8 14h1v2H8zM16 8h-3V5L8.500 9l4.500 4v-3h3z" />
        </svg>
      </TaskIcon>
      <TaskIcon aria-label="Fenster">
        <svg width="21" height="16" viewBox="0 0 21 16" fill="none" stroke="#75879a">
          <path d="M8 5V1h12v9h-6" />
          <path d="M8 2h12" strokeWidth="3" />
          <path d="M.500 7.500h12v8H.500z" />
          <path d="M0 7.500h13" strokeWidth="3" />
        </svg>
      </TaskIcon>
      <TaskIcon $blue aria-label="Dashboard">
        <svg width="19" height="18" viewBox="0 0 19 18" fill="none" stroke="#fff">
          <path d="M5 16.500C-1 13 .5 1.500 9.500 1.500S20 13 14 16.500z" strokeWidth="2" />
          <path d="M9 10l4-5" strokeWidth="1.500" />
          <circle cx="9" cy="10" r="1" fill="#fff" />
          <path d="M9.500 4v1M4 9h1M14 9h1M5.500 5.500l.7.7" />
        </svg>
      </TaskIcon>
      <Task>
        Bestellungen
        <TaskClose color="#8da1b1" />
      </Task>
      <Task $active>
        E-Mail an den Kunden senden
        <TaskClose color="#3596e3" />
      </Task>
    </TaskBar>
  </Page>
);

export default App;
